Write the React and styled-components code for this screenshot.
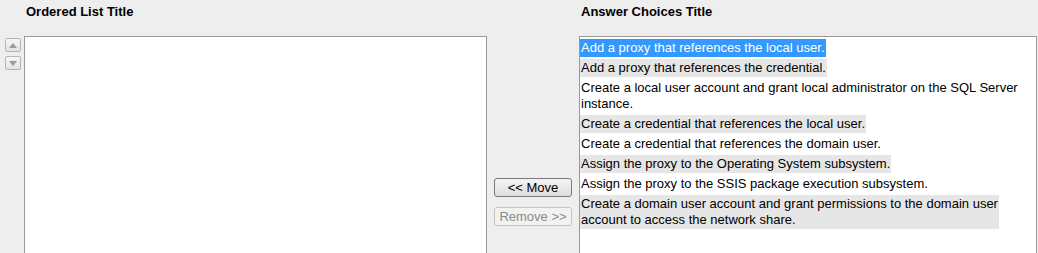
import React from 'react';
import styled, {createGlobalStyle} from "styled-components";

const GlobalStyle = createGlobalStyle`
  html, body {
    margin: 0;
    padding: 0;
    background: #eeeeee;
    overflow: hidden;
  }
  body {
    font-family: "Liberation Sans", Arial, sans-serif;
    font-size: 13px;
    color: #000;
  }
`;

const Layout = styled.div`
  display: grid;
  grid-template-columns: 24px 463px 92px 458px;
  grid-template-rows: 36px 320px;
  width: 1037px;
`;

const Title = styled.div`
  grid-column: ${props => props.col};
  padding: 4px 0 0 2px;
  font-weight: bold;
  font-size: 13px;
  line-height: 15px;
`;

const ArrowColumn = styled.div`
  display: flex;
  flex-direction: column;
  gap: 4px;
  padding: 2px 0 0 5px;
`;

const ArrowButton = styled.div`
  width: 14px;
  height: 12px;
  border: 1px solid #b5b5b5;
  border-radius: 2px;
  background: linear-gradient(#f6f6f6, #e2e2e2);
  display: flex;
  align-items: center;
  justify-content: center;
`;

const ListBox = styled.div`
  background: #fff;
  border: 1px solid #9a9a9a;
  border-bottom: none;
  box-sizing: border-box;
  display: flex;
  flex-direction: column;
  align-items: flex-start;
  gap: 2px;
  padding: 2px 0 0 0;
`;

const ButtonColumn = styled.div`
  display: flex;
  flex-direction: column;
  align-items: center;
  gap: 10px;
  padding-top: 142px;
`;

const Button = styled.div`
  width: 78px;
  height: 19px;
  box-sizing: border-box;
  border: 1px solid ${props => props.disabled ? "#c4c4c4" : "#7a7a7a"};
  border-radius: 3px;
  background: ${props => props.disabled ? "#f2f2f2" : "linear-gradient(#f4f4f4, #dedede)"};
  color: ${props => props.disabled ? "#8a8a8a" : "#000"};
  font-size: 13px;
  line-height: 17px;
  text-align: center;
`;

const Item = styled.div`
  padding: 1px;
  line-height: 16px;
  white-space: nowrap;
  background: ${props => props.selected ? "#3399ff" : props.shaded ? "#e6e6e6" : "transparent"};
  color: ${props => props.selected ? "#fff" : "#000"};
`;

// each choice is stored as the lines it wraps into
const choices = [
  ["Add a proxy that references the local user."],
  ["Add a proxy that references the credential."],
  ["Create a local user account and grant local administrator on the SQL Server", "instance."],
  ["Create a credential that references the local user."],
  ["Create a credential that references the domain user."],
  ["Assign the proxy to the Operating System subsystem."],
  ["Assign the proxy to the SSIS package execution subsystem."],
  ["Create a domain user account and grant permissions to the domain user", "account to access the network share."],
];

const Triangle = ({down}) => (
  <svg width="8" height="5" viewBox="0 0 8 5">
    <polygon points={down ? "0,0 8,0 4,5" : "0,5 8,5 4,0"} fill="#9a9a9a" />
  </svg>
);

export default function App() {
  return (
    <React.Fragment>
      <GlobalStyle />
      <Layout>
        <Title col="2">Ordered List Title</Title>
        <Title col="4">Answer Choices Title</Title>
        <ArrowColumn>
          <ArrowButton><Triangle /></ArrowButton>
          <ArrowButton><Triangle down /></ArrowButton>
        </ArrowColumn>
        <ListBox />
        <ButtonColumn>
          <Button>&lt;&lt; Move</Button>
          <Button disabled>Remove &gt;&gt;</Button>
        </ButtonColumn>
        <ListBox>
          {choices.map((lines, i) => (
            <Item key={i} selected={i === 0} shaded={i % 2 === 1}>
              {lines.map((l, j) => (
                <React.Fragment key={j}>
                  {j > 0 && <br />}
                  {l}
                </React.Fragment>
              ))}
            </Item>
          ))}
        </ListBox>
      </Layout>
    </React.Fragment>
  );
}
